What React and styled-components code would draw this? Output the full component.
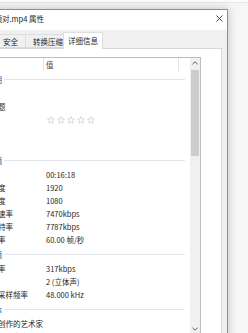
import React from "react";
import styled, { createGlobalStyle } from "styled-components";

const GlobalStyle = createGlobalStyle`
  html, body {
    margin: 0;
    padding: 0;
    background: #f8f8f8;
    overflow: hidden;
  }
  body {
    font-family: "Noto Sans CJK SC", "Microsoft YaHei", sans-serif;
    font-size: 7.5px;
    color: #262626;
  }
`;

const Page = styled.div`
  width: 248px;
  height: 333px;
  overflow: hidden;
  padding-top: 9px;
  box-sizing: border-box;
  background: linear-gradient(#fcfcfc 0 2px, #e8e8e8 2px 3px, #f6f6f6 3px);
`;

const Dialog = styled.div`
  width: 276px;
  margin-left: -48px;
  box-sizing: border-box;
  border: 1px solid #8e8e8e;
  background: #f0f0f0;
  box-shadow: 0 0 9px rgba(0, 0, 0, 0.22);
`;

const TitleBar = styled.div`
  height: 20px;
  box-sizing: border-box;
  background: #fff;
  display: flex;
  align-items: center;
  justify-content: space-between;
  padding: 0 4px 3px 19px;
  white-space: nowrap;
`;

const Title = styled.span`
  color: #1a1a1a;
`;

const Close = styled.svg`
  width: 7px;
  height: 7px;
`;

const Body = styled.div`
  padding: 2px 5px 0 7px;
`;

const TabStrip = styled.div`
  display: flex;
  align-items: flex-end;
  height: 16px;
  padding-left: 5px;
  position: relative;
  z-index: 1;
`;

const Tab = styled.div`
  height: ${p => (p.$active ? "17px" : "14px")};
  line-height: ${p => (p.$active ? "15px" : "13px")};
  margin-bottom: ${p => (p.$active ? "-1px" : "0")};
  margin-left: ${p => (p.$active ? "-8px" : "-1px")};
  padding: 0 ${p => (p.$active ? "4px" : "7px")};
  box-sizing: border-box;
  border: 1px solid #dedede;
  border-bottom: ${p => (p.$active ? "none" : "1px solid #d9d9d9")};
  background: ${p => (p.$active ? "#fff" : "#f0f0f0")};
  white-space: nowrap;
  position: relative;
  z-index: ${p => (p.$active ? 2 : 0)};
  &:first-child {
    margin-left: 0;
  }
`;

const Panel = styled.div`
  border: 1px solid #d9d9d9;
  background: #fff;
  padding: 8px 20px 0 9px;
  height: 300px;
`;

const ListBox = styled.div`
  display: flex;
  height: 278px;
  box-sizing: border-box;
  border: 1px solid #bdbdbd;
`;

const ListContent = styled.div`
  flex: 1;
  overflow: hidden;
`;

const HeaderRow = styled.div`
  display: flex;
  height: 13px;
  line-height: 13px;
  color: #4a4a4a;
`;

const HeaderCell = styled.div`
  width: ${p => p.$w}px;
  padding-left: ${p => p.$pad}px;
  box-sizing: border-box;
  border-right: 1px solid #e3e3e3;
  white-space: nowrap;
`;

const GroupRow = styled.div`
  display: flex;
  align-items: center;
  height: 16px;
  padding: 0 5px 0 16px;
  color: #1e3f8f;
  white-space: nowrap;
`;

const GroupLine = styled.div`
  flex: 1;
  height: 1px;
  margin-left: 2px;
  background: #e2e6ec;
`;

const ItemRow = styled.div`
  display: grid;
  grid-template-columns: 75px 1fr;
  height: 13px;
  line-height: 13px;
  white-space: nowrap;
`;

const Label = styled.div`
  padding-left: 12px;
  overflow: hidden;
`;

const Value = styled.div`
  display: flex;
  align-items: center;
`;

const Stars = styled.div`
  display: flex;
  gap: 2px;
  margin-left: 1px;
`;

const Star = styled.svg`
  width: 8px;
  height: 8px;
`;

const ScrollBar = styled.div`
  width: 10px;
  background: #f0f0f0;
  display: flex;
  flex-direction: column;
`;

const Arrow = styled.div`
  height: 10px;
  display: flex;
  align-items: center;
  justify-content: center;
`;

const Thumb = styled.div`
  height: 86px;
  margin: 2px 1px 0;
  background: #cdcdcd;
`;

const Spacer = styled.div`
  flex: 1;
`;

const groups = [
  {
    name: "说明",
    items: [["标题", ""], ["副标题", ""], ["分级", "stars"], ["标记", ""], ["备注", ""]],
  },
  {
    name: "视频",
    items: [
      ["长度", "00:16:18"],
      ["帧宽度", "1920"],
      ["帧高度", "1080"],
      ["数据速率", "7470kbps"],
      ["总比特率", "7787kbps"],
      ["帧速率", "60.00 帧/秒"],
    ],
  },
  {
    name: "音频",
    items: [["比特率", "317kbps"], ["频道", "2 (立体声)"], ["音频采样频率", "48.000 kHz"]],
  },
  {
    name: "媒体",
    items: [["参与创作的艺术家", ""], ["唱片集艺术家", ""]],
  },
];

const StarIcon = () => (
  <Star viewBox="0 0 10 10">
    <path
      d="M5 0.8 L6.2 3.7 L9.3 3.9 L6.9 5.9 L7.7 9 L5 7.3 L2.3 9 L3.1 5.9 L0.7 3.9 L3.8 3.7 Z"
      fill="none"
      stroke="#c6c6c6"
      strokeWidth="0.8"
      strokeLinejoin="round"
    />
  </Star>
);

const Chevron = ({ down }) => (
  <svg width="6" height="4" viewBox="0 0 6 4">
    <polyline
      points={down ? "0.5,0.8 3,3.2 5.5,0.8" : "0.5,3.2 3,0.8 5.5,3.2"}
      fill="none"
      stroke="#5f5f5f"
      strokeWidth="1"
    />
  </svg>
);

export default function App() {
  return (
    <>
      <GlobalStyle />
      <Page>
        <Dialog>
          <TitleBar>
            <Title>游戏视频对.mp4 属性</Title>
            <Close viewBox="0 0 7 7">
              <path d="M0.5 0.5 L6.5 6.5 M6.5 0.5 L0.5 6.5" stroke="#333" strokeWidth="0.9" />
            </Close>
          </TitleBar>
          <Body>
            <TabStrip>
              <Tab>常规</Tab>
              <Tab>安全</Tab>
              <Tab>转换压缩</Tab>
              <Tab $active>详细信息</Tab>
            </TabStrip>
            <Panel>
              <ListBox>
                <ListContent>
                  <HeaderRow>
                    <HeaderCell $w={73} $pad={12}>名称</HeaderCell>
                    <HeaderCell $w={135} $pad={2}>值</HeaderCell>
                  </HeaderRow>
                  {groups.map(g => (
                    <React.Fragment key={g.name}>
                      <GroupRow>
                        {g.name}
                        <GroupLine />
                      </GroupRow>
                      {g.items.map(([label, value]) => (
                        <ItemRow key={label}>
                          <Label>{label}</Label>
                          <Value>
                            {value === "stars" ? (
                              <Stars>
                                {[0, 1, 2, 3, 4].map(i => (
                                  <StarIcon key={i} />
                                ))}
                              </Stars>
                            ) : (
                              value
                            )}
                          </Value>
                        </ItemRow>
                      ))}
                    </React.Fragment>
                  ))}
                </ListContent>
                <ScrollBar>
                  <Arrow>
                    <Chevron />
                  </Arrow>
                  <Thumb />
                  <Spacer />
                  <Arrow>
                    <Chevron down />
                  </Arrow>
                </ScrollBar>
              </ListBox>
            </Panel>
          </Body>
        </Dialog>
      </Page>
    </>
  );
}
